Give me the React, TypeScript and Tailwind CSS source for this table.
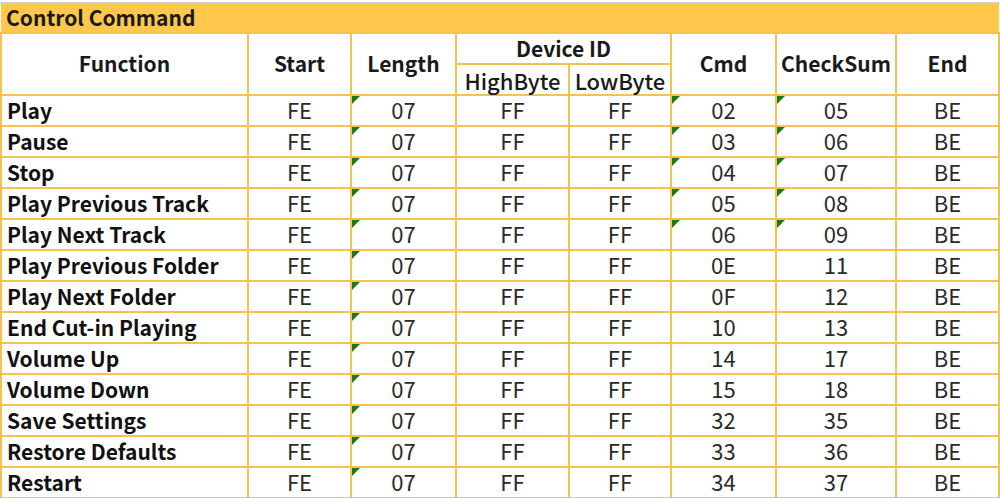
import { memo } from "react";

type Row = {
  name: string;
  cmd: string;
  sum: string;
  mark: boolean;
};

const rows: Row[] = [
  { name: "Play", cmd: "02", sum: "05", mark: true },
  { name: "Pause", cmd: "03", sum: "06", mark: true },
  { name: "Stop", cmd: "04", sum: "07", mark: true },
  { name: "Play Previous Track", cmd: "05", sum: "08", mark: true },
  { name: "Play Next Track", cmd: "06", sum: "09", mark: true },
  { name: "Play Previous Folder", cmd: "0E", sum: "11", mark: false },
  { name: "Play Next Folder", cmd: "0F", sum: "12", mark: false },
  { name: "End Cut-in Playing", cmd: "10", sum: "13", mark: false },
  { name: "Volume Up", cmd: "14", sum: "17", mark: false },
  { name: "Volume Down", cmd: "15", sum: "18", mark: false },
  { name: "Save Settings", cmd: "32", sum: "35", mark: false },
  { name: "Restore Defaults", cmd: "33", sum: "36", mark: false },
  { name: "Restart", cmd: "34", sum: "37", mark: false },
];

// little green "number stored as text" flag in the cell corner
const Flag = () => (
  <span className="absolute left-0 top-0 w-0 h-0 border-t-[8px] border-r-[8px] border-t-[#1a7a1a] border-r-transparent" />
);

const cell = "border-2 border-[#f5c250] text-center p-0 align-middle relative";

const App = () => {
  return (
    <div
      className="w-[1000px] h-[498px] bg-white overflow-hidden text-[#1a1a1a]"
      style={{ fontFamily: '"Noto Sans CJK SC", "Noto Sans", sans-serif' }}
    >
      <div className="h-[3px] border-b border-[#d4d4d4]" />
      <table className="table-fixed border-collapse w-[998px] text-[21px] leading-none">
        <colgroup>
          <col className="w-[247px]" />
          <col className="w-[103px]" />
          <col className="w-[105px]" />
          <col className="w-[113px]" />
          <col className="w-[102px]" />
          <col className="w-[105px]" />
          <col className="w-[120px]" />
          <col className="w-[103px]" />
        </colgroup>
        <thead>
          <tr className="h-[30px] bg-[#ffc84c]">
            <th colSpan={8} className="text-left pl-[5px] font-bold p-0">
              Control Command
            </th>
          </tr>
          <tr className="h-[31px]">
            <th rowSpan={2} className={`${cell} font-bold pb-[2px]`}>Function</th>
            <th rowSpan={2} className={`${cell} font-bold pb-[2px]`}>Start</th>
            <th rowSpan={2} className={`${cell} font-bold pb-[2px]`}>Length</th>
            <th colSpan={2} className={`${cell} font-bold`}>Device ID</th>
            <th rowSpan={2} className={`${cell} font-bold pb-[2px]`}>Cmd</th>
            <th rowSpan={2} className={`${cell} font-bold pb-[2px]`}>CheckSum</th>
            <th rowSpan={2} className={`${cell} font-bold pb-[2px]`}>End</th>
          </tr>
          <tr className="h-[31px]">
            <th className={`${cell} font-medium text-[22px]`}>HighByte</th>
            <th className={`${cell} font-medium text-[22px]`}>LowByte</th>
          </tr>
        </thead>
        <tbody className="text-[#2a2a2a] text-[22px]">
          {rows.map((r) => (
            <tr key={r.name} className="h-[31px]">
              <td className={`${cell} !text-left pl-[5px] font-bold text-[21px] text-[#111]`}>{r.name}</td>
              <td className={`${cell} pb-[3px]`}>FE</td>
              <td className={`${cell} pb-[3px]`}>
                <Flag />
                07
              </td>
              <td className={`${cell} pb-[3px]`}>FF</td>
              <td className={`${cell} pb-[3px]`}>FF</td>
              <td className={`${cell} pb-[3px]`}>
                {r.mark && <Flag />}
                {r.cmd}
              </td>
              <td className={`${cell} pb-[3px]`}>
                {r.mark && <Flag />}
                {r.sum}
              </td>
              <td className={`${cell} pb-[3px]`}>BE</td>
            </tr>
          ))}
        </tbody>
      </table>
    </div>
  );
};

export default memo(App);
